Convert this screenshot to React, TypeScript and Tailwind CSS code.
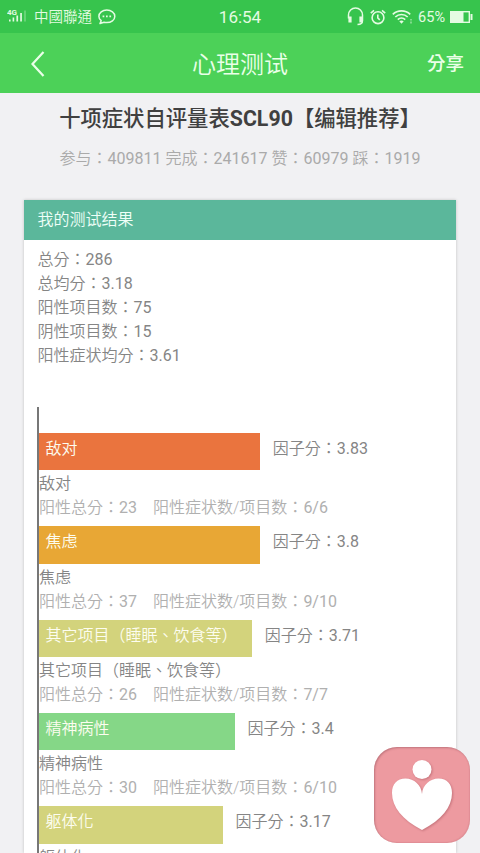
import * as React from "react";
import { FC } from "react";

type Factor = {
  name: string;
  score: string;
  total: number;
  ratio: string;
  width: number;
  color: string;
};

const summary: string[][] = [
  ["总分：", "286"],
  ["总均分：", "3.18"],
  ["阳性项目数：", "75"],
  ["阴性项目数：", "15"],
  ["阳性症状均分：", "3.61"],
];

const stats: string[][] = [
  ["参与：", "409811 "],
  ["完成：", "241617 "],
  ["赞：", "60979 "],
  ["踩：", "1919"],
];

const factors: Factor[] = [
  { name: "敌对", score: "3.83", total: 23, ratio: "6/6", width: 221.3, color: "bg-[#ea743e]" },
  { name: "焦虑", score: "3.8", total: 37, ratio: "9/10", width: 221.3, color: "bg-[#e8a735]" },
  { name: "其它项目（睡眠、饮食等）", score: "3.71", total: 26, ratio: "7/7", width: 213.3, color: "bg-[#d3d37c]" },
  { name: "精神病性", score: "3.4", total: 30, ratio: "6/10", width: 196, color: "bg-[#85d787]" },
  { name: "躯体化", score: "3.17", total: 38, ratio: "9/12", width: 184, color: "bg-[#d3d37c]" },
];

const StatusBar: FC = () => (
  <div className="flex h-[33px] items-center bg-[#37c44d] text-[#e4fbe2]">
    <div className="flex flex-1 items-center">
      <svg className="ml-[7px] h-[17px] w-[20px]" viewBox="0 0 20 17" fill="currentColor" aria-hidden="true">
        <text x="0" y="6.8" fontSize="8" fontWeight="700" fontFamily="Roboto, sans-serif">
          4G
        </text>
        <rect x="2" y="11.5" width="1.6" height="2" />
        <rect x="5.6" y="9.5" width="1.6" height="4" />
        <rect x="9.4" y="7.5" width="1.7" height="6" />
        <rect x="13.2" y="5" width="1.7" height="8.5" />
        <rect x="17.4" y="2.5" width="1.2" height="11" opacity="0.45" />
      </svg>
      <span className="ml-[7px] pt-[3px] text-[14.5px] font-[350]">中國聯通</span>
      <svg className="ml-[6px] h-[16px] w-[18px]" viewBox="0 0 18 16" fill="none" stroke="currentColor" strokeWidth="1.5" aria-hidden="true">
        <path d="M3.2 11.6C1.7 10.5.9 9 .9 7.4.9 3.9 4.4 1.1 8.8 1.1s8 2.8 8 6.3-3.6 6.2-8 6.2c-1 0-1.9-.1-2.8-.4L2 14.5z" strokeLinejoin="round" />
        <path d="M4.6 7.3h1.7M8 7.3h1.7M11.4 7.3h1.7" strokeWidth="1.7" />
      </svg>
    </div>
    <span className="pt-[3px] text-[17px]">16:54</span>
    <div className="flex flex-1 items-center justify-end">
      <svg className="mr-[6px] h-[19px] w-[17px]" viewBox="0 0 17 19" fill="none" stroke="currentColor" aria-hidden="true">
        <path d="M1.5 11.5V8a7 7 0 0 1 14 0v5.5c0 2.500-1.500 4-5 4" strokeWidth="1.5" />
        <path d="M3 9.5v6M14 9.5v6" strokeWidth="3.2" />
      </svg>
      <svg className="mr-[6px] h-[16px] w-[16px]" viewBox="0 0 16 16" fill="none" stroke="currentColor" strokeWidth="1.6" aria-hidden="true">
        <circle cx="8" cy="8.7" r="5.9" />
        <path d="M7.8 5.5v3.5l2 1.8M.8 4.200 4 1.300M15.200 4.200 12 1.300" />
      </svg>
      <svg className="mr-[5px] h-[16px] w-[21px]" viewBox="0 0 21 16" fill="none" stroke="currentColor" strokeWidth="1.7" aria-hidden="true">
        <path d="M.8 5.3a12.5 12.5 0 0 1 17.4 0M3.3 8a9 9 0 0 1 12.4 0M5.8 10.6a5.4 5.4 0 0 1 7.4 0" />
        <path d="M7.3 12.3Q9.5 10.8 11.7 12.3L9.5 14.8z" fill="currentColor" stroke="none" />
        <path d="M19 10v1.5M19 12.5v2" strokeWidth="1.2" opacity="0.7" />
      </svg>
      <span className="pt-[2px] text-[14.5px]">65%</span>
      <svg className="mr-[7px] ml-[5px] h-[12px] w-[23px]" viewBox="0 0 23 12" aria-hidden="true">
        <rect x="0.7" y="0.7" width="18.6" height="10.6" fill="none" stroke="currentColor" strokeWidth="1.4" />
        <rect x="1" y="1" width="12.5" height="10" fill="currentColor" />
        <rect x="20.5" y="3" width="2" height="6" fill="currentColor" />
      </svg>
    </div>
  </div>
);

const NavBar: FC = () => (
  <header className="grid h-[60px] grid-cols-[1fr_auto_1fr] items-center bg-[#4cd158] text-[#eaffe8]">
    <svg className="mt-px ml-[30px] h-[28px] w-[16px]" viewBox="0 0 16 28" fill="none" stroke="currentColor" strokeWidth="2.2" aria-hidden="true">
      <path d="M13.5 2 2.5 14l11 12" />
    </svg>
    <h1 className="pt-[3px] text-2xl font-[350]">心理测试</h1>
    <span className="justify-self-end pt-[3px] pr-4 text-[18.5px] font-medium">分享</span>
  </header>
);

const FactorRow: FC<{ factor: Factor }> = ({ factor }) => (
  <div className="mb-2 h-[85.33px] leading-6 whitespace-nowrap">
    <div className="flex h-[37.33px]">
      <div className={`shrink-0 pt-1 pl-[6.5px] text-[#fdfdf0] ${factor.color}`} style={{ width: factor.width }}>
        {factor.name}
      </div>
      <span className="pt-1 pl-[12.5px]">
        因子分：<span className="font-normal">{factor.score}</span>
      </span>
    </div>
    <div className="pt-[2px]">
      <p>{factor.name}</p>
      <p className="text-[#b0b0b0]">
        阳性总分：<span className="font-normal">{factor.total}</span>
        <span className="ml-4">
          阳性症状数/项目数：<span className="font-normal">{factor.ratio}</span>
        </span>
      </p>
    </div>
  </div>
);

const App: FC = () => {
  return (
    <div
      lang="zh-Hant"
      className="relative flex h-[853px] w-[480px] flex-col overflow-hidden bg-[#f1f1f3] font-['Roboto','Noto_Sans_CJK_TC',sans-serif]"
    >
      <StatusBar />
      <NavBar />
      <div className="pt-[9px] text-center whitespace-nowrap">
        <h2 className="pt-px text-[21.33px] leading-8 font-medium text-[#404040]">
          十项症状自评量表<span className="font-bold">SCL90</span>【编辑推荐】
        </h2>
        <p className="mt-[12px] leading-6 font-[350] text-[#aaa]">
          {stats.map(([label, value]) => (
            <React.Fragment key={label}>
              {label}
              <span className="font-normal">{value}</span>
            </React.Fragment>
          ))}
        </p>
      </div>
      <section className="mx-6 mt-[29px] flex min-h-0 flex-1 flex-col bg-white shadow-[0_0_3px_rgba(0,0,0,0.2)]">
        <div className="h-10 shrink-0 bg-[#5bb79b] pl-[13.5px] leading-[40px] font-[350] text-[#effff8]">我的测试结果</div>
        <div className="flex min-h-0 flex-1 flex-col pt-[8px] pl-[13px] font-[350] text-[#858585]">
          <ul className="shrink-0 pl-[0.5px] leading-6">
            {summary.map(([label, value]) => (
              <li key={label}>
                {label}
                <span className="font-normal">{value}</span>
              </li>
            ))}
          </ul>
          <div className="mt-[39px] min-h-0 flex-1 overflow-hidden border-l-2 border-[#777] pt-[26px]">
            {factors.map((factor) => (
              <FactorRow key={factor.name} factor={factor} />
            ))}
          </div>
        </div>
      </section>
      {/* floating shortcut */}
      <button className="absolute right-[10px] bottom-[10px] h-24 w-24 overflow-hidden rounded-[23px] bg-[#ed9aa0] shadow-[inset_1px_1px_2px_rgba(110,50,60,0.35),inset_-1px_-1px_1px_rgba(150,70,80,0.12)]">
        <svg className="h-24 w-24 drop-shadow-[1px_1px_1px_rgba(140,60,70,0.4)]" viewBox="0 0 96 96" fill="#fff" aria-hidden="true">
          <circle cx="48" cy="22.5" r="9.5" />
          <path d="M48 47C47.500 38 40 31.500 31.500 31.500 23 31.500 18 37 18 46c0 14 10.500 27 30 37 19.500-10 30-23 30-37 0-9-5-14.500-13.500-14.500C56 31.500 48.500 38 48 47z" />
        </svg>
      </button>
    </div>
  );
};

export default App;
